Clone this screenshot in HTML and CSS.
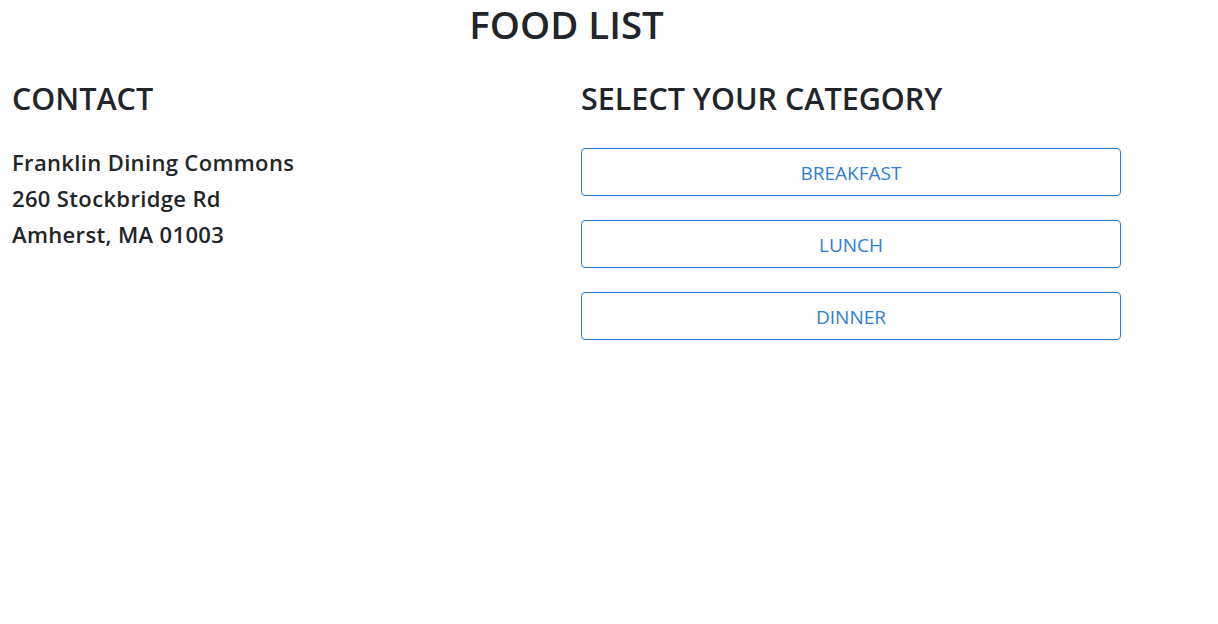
FILE: index.html
```html
<!DOCTYPE html>
<html lang="en">
<head>
<meta charset="utf-8">
<title>Food List</title>
<link rel="stylesheet" href="styles.css">
</head>
<body>
<div class="page">
  <h1 class="title">FOOD LIST</h1>
  <div class="columns">
    <section class="contact">
      <h2 class="section-title">CONTACT</h2>
      <p class="address-line">Franklin Dining Commons</p>
      <p class="address-line">260 Stockbridge Rd</p>
      <p class="address-line">Amherst, MA 01003</p>
    </section>
    <section class="category">
      <h2 class="section-title">SELECT YOUR CATEGORY</h2>
      <div class="buttons">
        <button class="cat-btn">BREAKFAST</button>
        <button class="cat-btn">LUNCH</button>
        <button class="cat-btn">DINNER</button>
      </div>
    </section>
  </div>
</div>
</body>
</html>
```

FILE: styles.css
```css
* { box-sizing: border-box; }
html, body { margin: 0; padding: 0; background: #fff; }
body {
  font-family: "Open Sans", "Noto Sans", "Liberation Sans", sans-serif;
  color: #212529;
}
.page {
  width: 1133px;
  padding: 0 12px;
}
.title {
  margin: 0;
  text-align: center;
  font-size: 38.4px;
  font-weight: 600;
  line-height: 48px;
}
.columns {
  display: grid;
  grid-template-columns: 569px 540px;
  margin-top: 30px;
}
.section-title {
  margin: 0 0 26px;
  font-size: 30.5px;
  font-weight: 600;
  line-height: 40px;
}
.address-line {
  margin: 0;
  font-size: 22px;
  font-weight: 600;
  line-height: 36px;
  letter-spacing: 0.35px;
}
.buttons {
  display: flex;
  flex-direction: column;
  gap: 24px;
  padding-top: 4px;
}
.cat-btn {
  height: 48px;
  width: 100%;
  background: #fff;
  border: 1px solid #2e7dd6;
  border-radius: 4px;
  color: #2e7dd6;
  font-family: inherit;
  font-size: 19px;
  font-weight: 400;
  padding-top: 2px;
  cursor: pointer;
}
```
